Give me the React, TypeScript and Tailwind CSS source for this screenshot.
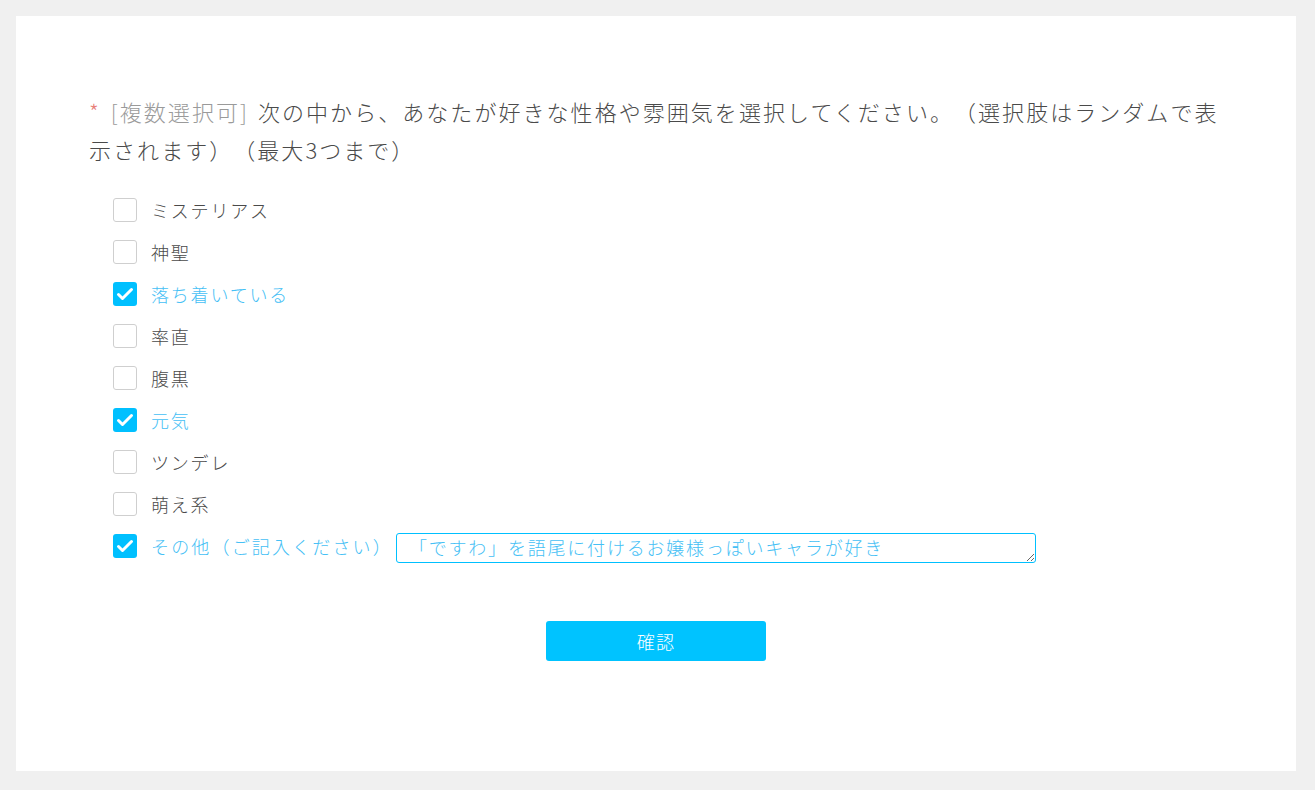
import { useState } from "react";

const OPTIONS = [
  "ミステリアス",
  "神聖",
  "落ち着いている",
  "率直",
  "腹黒",
  "元気",
  "ツンデレ",
  "萌え系",
];

function CheckBox({ checked }: { checked: boolean }) {
  if (checked) {
    return (
      <span className="flex h-6 w-6 shrink-0 items-center justify-center rounded-[3px] bg-[#00c0ff]">
        <svg width="24" height="24" viewBox="0 0 24 24" fill="none">
          <path d="M5.5 12.5l4 4L18.5 7.5" stroke="white" strokeWidth="3" strokeLinecap="round" strokeLinejoin="round" />
        </svg>
      </span>
    );
  }
  return <span className="h-6 w-6 shrink-0 rounded-[3px] border border-[#cfcfcf] bg-white" />;
}

export default function App() {
  const [checked, setChecked] = useState<string[]>(["落ち着いている", "元気", "その他"]);
  const [other, setOther] = useState("「ですわ」を語尾に付けるお嬢様っぽいキャラが好き");

  function toggle(v: string) {
    setChecked((c) => (c.includes(v) ? c.filter((x) => x !== v) : [...c, v]));
  }

  const isOther = checked.includes("その他");

  return (
    <div className="min-h-[790px] bg-[#f0f0f0] p-4 font-['Noto_Sans_CJK_JP',sans-serif] font-light tracking-[0.08em] [text-spacing-trim:space-all]">
      <div className="h-[755px] w-[1280px] bg-white px-[73px] pt-[76px]">
        <p className="-mr-[13px] text-[22px] leading-[38px] tracking-[0.093em] text-[#4a4a4a]">
          <span className="mr-[10px] text-[#e8807a]">*</span>
          <span className="mr-[9px] text-[#9a9a9a]">[複数選択可]</span>次の中から、あなたが好きな性格や雰囲気を選択してください。（選択肢はランダムで表示されます）（最大3つまで）
        </p>

        <div className="mt-[21px] pl-6">
          {OPTIONS.map((o) => {
            const on = checked.includes(o);
            return (
              <label key={o} onClick={() => toggle(o)} className="flex h-[42px] cursor-pointer items-center gap-[14px]">
                <CheckBox checked={on} />
                <span className={`text-[18px] tracking-[0.1em] ${on ? "text-[#45c0f5]" : "text-[#4a4a4a]"}`}>{o}</span>
              </label>
            );
          })}
          <div className="flex h-[42px] items-center gap-[14px]">
            <span className="cursor-pointer" onClick={() => toggle("その他")}>
              <CheckBox checked={isOther} />
            </span>
            <span className={`text-[18px] tracking-[0.12em] ${isOther ? "text-[#45c0f5]" : "text-[#4a4a4a]"}`}>その他（ご記入ください）</span>
            <textarea
              value={other}
              onChange={(e) => setOther(e.target.value)}
              rows={1}
              className="-ml-[11px] mt-1 h-[30px] w-[640px] resize-y rounded-[3px] border border-[#00c0ff] pl-[12px] pr-1.5 py-0 text-[18px] leading-[26px] tracking-[0.1em] text-[#45c0f5] outline-none"
            />
          </div>
        </div>

        <div className="mt-[54px] flex justify-center">
          <button className="h-10 w-[220px] rounded-[3px] bg-[#00c3ff] text-[18px] text-white">確認</button>
        </div>
      </div>
    </div>
  );
}
